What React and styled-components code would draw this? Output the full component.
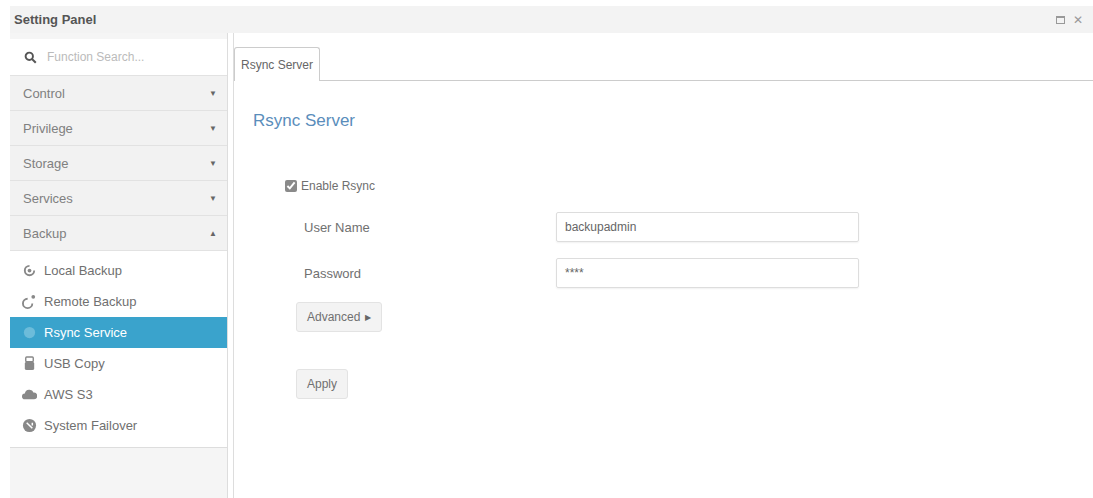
import React from "react";
import styled, { createGlobalStyle } from "styled-components";

const Global = createGlobalStyle`
  body { margin: 0; background: #fff; font-family: "Liberation Sans", Arial, sans-serif; }
`;

const Page = styled.div`
  width: 1093px;
  height: 498px;
  padding: 6px 0 0 10px;
  box-sizing: border-box;
  display: flex;
  flex-direction: column;
  overflow: hidden;
`;

const TitleBar = styled.div`
  height: 27px;
  background: #f3f3f3;
  display: flex;
  align-items: center;
  justify-content: space-between;
  padding: 0 10px 0 4px;
  font-weight: bold;
  font-size: 13px;
  color: #555;
`;

const WinCtl = styled.div`
  display: flex;
  gap: 8px;
  color: #999;
  font-weight: normal;
  font-size: 12px;
  align-items: center;
`;

const Body = styled.div`
  flex: 1;
  display: flex;
`;

const Sidebar = styled.div`
  width: 217px;
  display: flex;
  flex-direction: column;
  background: #f5f5f5;
  border-right: 1px solid #ddd;
  box-shadow: 5px 0 0 #fff, 6px 0 0 #ddd;
`;

const Search = styled.div`
  height: 36px;
  margin-top: 6px;
  background: #fff;
  display: flex;
  align-items: center;
  gap: 10px;
  padding-left: 14px;
  font-size: 12px;
  color: #bbb;
`;

const Group = styled.div`
  height: 34px;
  border-top: 1px solid #e2e2e2;
  background: #f2f2f2;
  display: flex;
  align-items: center;
  justify-content: space-between;
  padding: 0 10px 0 13px;
  font-size: 13px;
  color: #808080;
`;

const Arrow = styled.span`
  font-size: 8px;
  color: #666;
`;

const SubList = styled.div`
  background: #fff;
  border-top: 1px solid #e2e2e2;
  border-bottom: 1px solid #ddd;
  padding: 4px 0 6px;
`;

const Sub = styled.div`
  height: 31px;
  display: flex;
  align-items: center;
  gap: 7px;
  padding-left: 12px;
  font-size: 13px;
  color: ${p => (p.$active ? "#fff" : "#707070")};
  background: ${p => (p.$active ? "#3aa3cc" : "transparent")};
  svg { color: ${p => (p.$active ? "#6cbcda" : "#888")}; }
`;

const Main = styled.div`
  flex: 1;
  margin-left: 6px;
  padding-top: 14px;
  display: flex;
  flex-direction: column;
`;

const TabBar = styled.div`
  display: flex;
  border-bottom: 1px solid #ccc;
  height: 33px;
`;

const Tab = styled.div`
  width: 84px;
  border: 1px solid #ccc;
  border-bottom: none;
  border-radius: 3px 3px 0 0;
  background: #fff;
  margin-bottom: -1px;
  display: flex;
  align-items: center;
  justify-content: center;
  font-size: 12px;
  color: #666;
`;

const Content = styled.div`
  padding: 30px 0 0 19px;
`;

const Heading = styled.h2`
  margin: 0 0 48px;
  font-weight: normal;
  font-size: 17px;
  color: #5a8dbb;
`;

const Check = styled.label`
  display: flex;
  align-items: center;
  gap: 4px;
  margin-left: 32px;
  font-size: 12px;
  color: #707070;
  input { margin: 0; width: 12px; height: 12px; accent-color: #8a8a8a; }
`;

const Row = styled.div`
  display: grid;
  grid-template-columns: 252px 303px;
  align-items: center;
  margin: ${p => p.$mt}px 0 0 51px;
  font-size: 13px;
  color: #707070;
`;

const Input = styled.div`
  height: 28px;
  border: 1px solid #ddd;
  border-radius: 2px;
  box-shadow: 0 1px 2px rgba(0,0,0,0.06);
  display: flex;
  align-items: center;
  padding-left: 8px;
  font-size: 12px;
  color: #666;
`;

const Button = styled.div`
  display: inline-flex;
  align-items: center;
  gap: 5px;
  height: 28px;
  padding: 0 10px;
  margin: ${p => p.$mt}px 0 0 43px;
  background: #f3f3f3;
  border: 1px solid #e3e3e3;
  border-radius: 3px;
  font-size: 12px;
  color: #707070;
  align-self: flex-start;
`;

const Col = styled.div`
  display: flex;
  flex-direction: column;
`;

const Icon = ({ children }) => (
  <svg width="15" height="15" viewBox="0 0 16 16" fill="currentColor">{children}</svg>
);

const groups = ["Control", "Privilege", "Storage", "Services"];

export default function App() {
  return (
    <Page>
      <Global />
      <TitleBar>
        Setting Panel
        <WinCtl>
          <svg width="9" height="8"><rect x="0.5" y="0.5" width="8" height="7" fill="none" stroke="#999" /><rect x="0" y="0" width="9" height="2" fill="#999" /></svg>
          <span>✕</span>
        </WinCtl>
      </TitleBar>
      <Body>
        <Sidebar>
          <Search>
            <svg width="13" height="13" viewBox="0 0 16 16"><circle cx="6.5" cy="6.5" r="4.5" fill="none" stroke="#555" strokeWidth="2.4" /><path d="M10 10l4.5 4.5" stroke="#555" strokeWidth="2.6" /></svg>
            Function Search...
          </Search>
          {groups.map(g => (
            <Group key={g}>{g}<Arrow>▼</Arrow></Group>
          ))}
          <Group>Backup<Arrow>▲</Arrow></Group>
          <SubList>
            <Sub><Icon><path d="M8 2a6 6 0 1 0 6 6h-2a4 4 0 1 1-4-4z" /><circle cx="8" cy="8" r="2" /></Icon>Local Backup</Sub>
            <Sub><Icon><path d="M6 4a6 6 0 1 0 6 6h-2a4 4 0 1 1-4-4z" /><circle cx="12" cy="3" r="2" /></Icon>Remote Backup</Sub>
            <Sub $active><Icon><circle cx="8" cy="8" r="6" /></Icon>Rsync Service</Sub>
            <Sub><Icon><rect x="4" y="1" width="8" height="5" rx="1" fill="none" stroke="currentColor" strokeWidth="1.5" /><rect x="3" y="6" width="10" height="9" rx="2" /></Icon>USB Copy</Sub>
            <Sub><Icon><path d="M3 13a3 3 0 0 1 0-6 5 5 0 0 1 9.5-1A3.5 3.5 0 0 1 13 13z" /></Icon>AWS S3</Sub>
            <Sub><Icon><circle cx="8" cy="8" r="7" /><path d="M5 5l6 6M11 5v3" stroke="#fff" strokeWidth="1.6" /></Icon>System Failover</Sub>
          </SubList>
        </Sidebar>
        <Main>
          <TabBar><Tab>Rsync Server</Tab></TabBar>
          <Content>
            <Heading>Rsync Server</Heading>
            <Col>
              <Check><input type="checkbox" defaultChecked />Enable Rsync</Check>
              <Row $mt={19}>User Name<Input>backupadmin</Input></Row>
              <Row $mt={16}>Password<Input>****</Input></Row>
              <Button $mt={14}>Advanced <Arrow>▶</Arrow></Button>
              <Button $mt={37}>Apply</Button>
            </Col>
          </Content>
        </Main>
      </Body>
    </Page>
  );
}
